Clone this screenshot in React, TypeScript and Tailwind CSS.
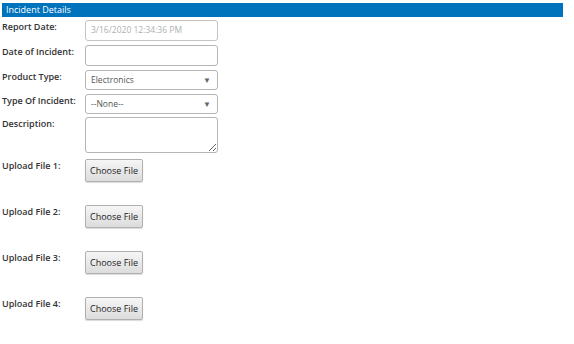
const FONT = "font-['Open_Sans',_'Liberation_Sans',_sans-serif]"

function Label({ children }: { children: string }) {
  return (
    <div className="w-[83px] shrink-0 pt-[1px] text-[9px] leading-[12px] font-semibold text-[#333]">
      {children}
    </div>
  )
}

function SelectBox({ value }: { value: string }) {
  return (
    <div className="w-[133px] h-[20px] rounded-[3px] border border-[#b5b5b5] bg-white flex items-center justify-between pl-[5px] pr-[6px] text-[8.5px] text-[#555]">
      <span>{value}</span>
      <span className="text-[8px] text-[#666]">▼</span>
    </div>
  )
}

function FileButton() {
  return (
    <button className="w-[58px] h-[23px] rounded-[2px] border border-[#b0b0b0] bg-gradient-to-b from-[#f6f6f6] to-[#dcdcdc] text-[9px] text-[#222] shadow-[0_1px_1px_rgba(0,0,0,0.15)]">
      Choose File
    </button>
  )
}

export default function App() {
  return (
    <div className={`${FONT} w-[574px] h-[344px] bg-white pt-[3px] pl-[2px]`}>
      <div className="w-[561px] h-[14px] bg-[#0073bd] text-white text-[9px] leading-[14px] pl-[4px]">
        Incident Details
      </div>

      <div className="flex mt-[3px]">
        <Label>Report Date:</Label>
        <div className="w-[133px] h-[21px] rounded-[3px] border border-[#c4c4c4] bg-white flex items-center pl-[5px] text-[8.5px] text-[#b0b0b0]">
          3/16/2020 12:34:36 PM
        </div>
      </div>

      <div className="flex mt-[4px]">
        <Label>Date of Incident:</Label>
        <div className="w-[133px] h-[21px] rounded-[3px] border border-[#b5b5b5] bg-white" />
      </div>

      <div className="flex mt-[4px]">
        <Label>Product Type:</Label>
        <SelectBox value="Electronics" />
      </div>

      <div className="flex mt-[4px]">
        <Label>Type Of Incident:</Label>
        <SelectBox value="--None--" />
      </div>

      <div className="flex mt-[3px]">
        <Label>Description:</Label>
        <textarea className="w-[133px] h-[36px] rounded-[3px] border border-[#b5b5b5] bg-white" readOnly />
      </div>

      <div className="flex flex-col gap-[23px] mt-[6px]">
        {[1, 2, 3, 4].map((n) => (
          <div key={n} className="flex">
            <Label>{`Upload File ${n}:`}</Label>
            <FileButton />
          </div>
        ))}
      </div>
    </div>
  )
}
